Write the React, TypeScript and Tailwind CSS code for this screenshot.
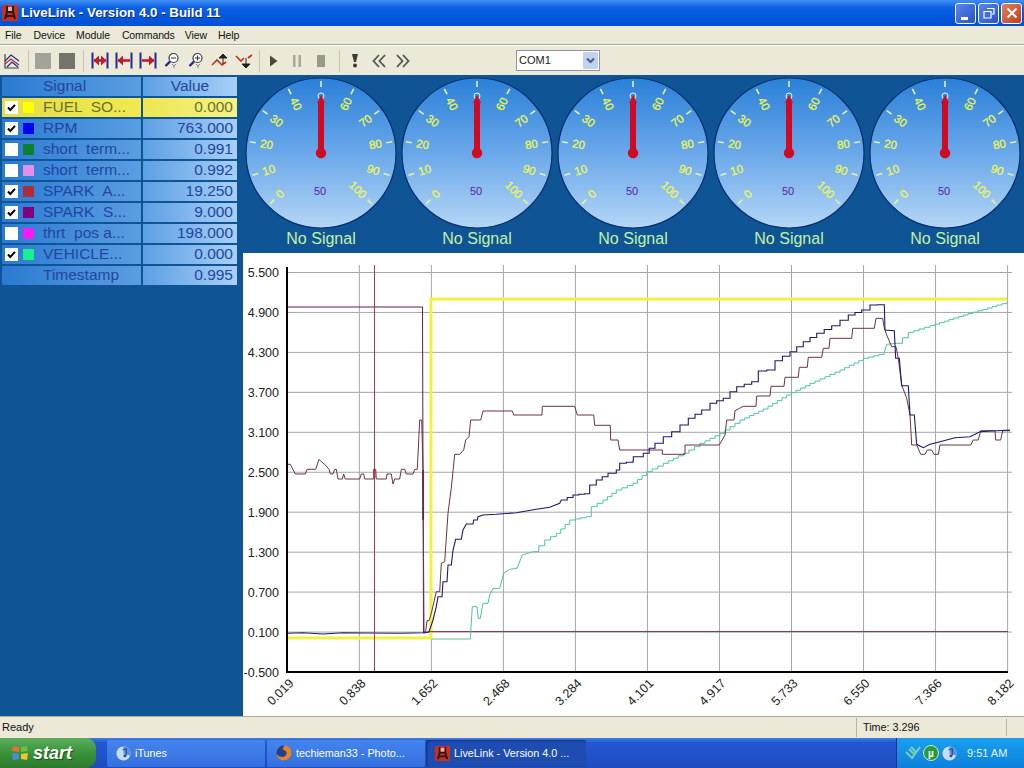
import React from "react";

const SANS = "font-['Liberation_Sans',Arial,sans-serif]";

type P = [number, number];
const z7 = (a: number[]): P[] => pairs(a).map(([x, y]) => [243 + x / 3, 255 + y / 3]);
const z8 = (a: number[]): P[] => pairs(a).map(([x, y]) => [243 + x / 3, 500 + y / 3]);
const z9 = (a: number[]): P[] => pairs(a).map(([x, y]) => [630 + x / 3, 255 + y / 3]);
function pairs(a: number[]): P[] {
  const r: P[] = [];
  for (let i = 0; i < a.length; i += 2) r.push([a[i], a[i + 1]]);
  return r;
}
const line = (p: P[]) => p.map(([x, y]) => `${x.toFixed(1)},${y.toFixed(1)}`).join(" ");
function stairs(p: P[], step: number): P[] {
  const out: P[] = [p[0]];
  for (let i = 1; i < p.length; i++) {
    const [x0, y0] = p[i - 1];
    const [x1, y1] = p[i];
    const n = Math.max(1, Math.round((x1 - x0) / step));
    for (let k = 1; k <= n; k++) {
      const x = x0 + ((x1 - x0) * k) / n;
      const y = y0 + ((y1 - y0) * k) / n;
      out.push([x, out[out.length - 1][1]]);
      out.push([x, y]);
    }
  }
  return out;
}

const brown: P[] = [
  ...z7([132,628,142,628,157,657,187,657,192,643,218,643,228,613,235,620,245,628,258,643,262,657,270,657,275,643,280,643,285,672,298,672,302,657,307,672,350,672,355,657,362,657,365,672,392,672,392,643,398,643,400,672,430,672,432,657,445,657,450,687,455,672,470,672,475,643,485,643,490,657,510,657,515,643,523,643,530,495,536,495,540,645,541,790]),
  ...z8([541,60,543,395,548,395,552,362,558,362,565,340,580,275,590,275,595,190,605,185,615,40,620,0]),
  ...z7([625,700,635,598,650,598,662,585,668,555,678,545,683,495,713,495,720,468,808,468,812,480,897,480,898,454,995,454,1003,480,1052,480,1055,511,1102,511,1103,555,1125,555,1130,585,1170,585]),
  ...z9([97,585,97,598,165,598,165,570,268,570,285,540,290,495,312,495,315,467,340,454,378,454,380,423,420,423,423,394,462,394,465,367,505,367,508,337,532,337,535,307,575,307,580,280,597,280,600,250,665,250,668,220,733,220,738,190,758,190,762,215,770,240,785,275,798,275,805,310,815,390,830,430,840,480,845,570,860,570,872,598,885,598,892,585,905,585,912,598,925,598,930,570,1022,570,1030,555,1045,555,1052,527,1095,527,1097,555,1112,555,1118,527,1140,527]),
];
const blue: P[] = [
  ...z8([132,400,180,398,240,402,300,398,370,399,470,400,545,398,558,395,570,360,580,320,585,290,597,290,600,245,612,245,615,195,625,195,630,150,638,118,655,118,660,90,670,72,690,72,692,60,703,60,705,50,720,45,760,43,820,38,880,28,920,22,950,10]),
  ...stairs([
    ...z7([955,735,990,720,1025,716,1040,690,1060,675,1095,655,1120,645,1130,625,1170,618]),
    ...z9([10,605,40,595,75,565,100,545,125,530,150,510,175,490,215,465,240,445,280,430,300,410,320,395,365,380,385,348,410,345,435,317,480,290,520,260,560,235,605,212,655,180,695,165,720,150,763,148]),
  ], 7),
  ...z9([765,225,793,227,797,310,808,310,815,392,835,392,840,480,853,480,860,568,880,578,900,568,930,560,975,548,1020,545,1050,530,1100,527,1140,525]),
];
const green: P[] = [
  ...z8([565,417,682,417,688,320,702,320,706,355,712,355,720,310,735,310,740,285,750,265,770,265,782,220,800,208,822,205,838,165,870,155]),
  ...stairs([
    ...z8([870,155,905,120,940,100,980,60,1030,50,1045,20,1080,0]),
    ...z7([1120,705,1170,685]),
    ...z9([50,650,100,625,160,595,210,565,270,535,330,495,400,462,470,420,540,385,630,345,700,310,762,295]),
  ], 5),
  ...z9([770,268,800,265]),
  ...stairs(z9([800,265,835,232,900,212,1000,180,1130,142]), 5),
];

const yGrid = ["5.500","4.900","4.300","3.700","3.100","2.500","1.900","1.300","0.700","0.100","-0.500"];
const xGrid = ["0.019","0.838","1.652","2.468","3.284","4.101","4.917","5.733","6.550","7.366","8.182"];

function Chart() {
  return (
    <div className="flex-1 bg-white">
      <svg viewBox="243 253 781 463" width={781} height={463} className={`block ${SANS}`}>
        {yGrid.map((l, i) => {
          const y = 272.5 + i * 39.95;
          return (
            <g key={l}>
              {i < 10 && <line x1={287} x2={1012} y1={y} y2={y} stroke="#a6a6a6" strokeWidth={1} />}
              <text x={279} y={y + 4.5} textAnchor="end" fontSize={12.5} fill="#222">{l}</text>
            </g>
          );
        })}
        {xGrid.map((l, i) => {
          const x = 287.3 + i * 72.03;
          return (
            <g key={l}>
              {i > 0 && <line x1={x} x2={x} y1={265} y2={672} stroke="#a6a6a6" strokeWidth={1} />}
              <text x={x + 7} y={684} textAnchor="end" fontSize={12.5} fill="#222" transform={`rotate(-45 ${x + 7} 684)`}>{l}</text>
            </g>
          );
        })}
        <polyline points="288,638 431,638 431,299 1007,299" fill="none" stroke="#f2f23c" strokeWidth={3} />
        <polyline points="287,307 422.5,307 423.5,633" fill="none" stroke="#5a1f4c" strokeWidth={1} />
        <polyline points="423.5,633 431,631.6 1008,631.6" fill="none" stroke="#8a2a48" strokeWidth={1} />
        <polyline points={line(green)} fill="none" stroke="#50c4a0" strokeWidth={1} />
        <polyline points={line(brown)} fill="none" stroke="#6e3346" strokeWidth={1} />
        <polyline points={line(blue)} fill="none" stroke="#1c1a6a" strokeWidth={1.1} />
        <line x1={423} x2={423} y1={470} y2={520} stroke="#5a1f4c" strokeWidth={1.4} />
        <line x1={374.5} x2={374.5} y1={265} y2={672} stroke="#a83a4c" strokeWidth={1} />
        <line x1={374.5} x2={374.5} y1={469} y2={478} stroke="#a83a4c" strokeWidth={2} />
        <line x1={287} x2={287} y1={267} y2={673} stroke="#000" strokeWidth={2} />
        <line x1={286} x2={1008} y1={672} y2={672} stroke="#000" strokeWidth={2} />
      </svg>
    </div>
  );
}

function Gauge({ id }: { id: number }) {
  const cx = 78, cy = 78;
  const rad = (a: number) => (a * Math.PI) / 180;
  const labels = [0, 10, 20, 30, 40, 60, 70, 80, 90, 100];
  const angle = (v: number) => -135 + (v / 10) * 27;
  const ticks = [0, 10, 20, 30, 40, 50, 60, 70, 80, 90, 100];
  return (
    <div className="w-[156px] flex flex-col items-center">
      <svg width={156} height={155} viewBox="0 0 156 155" className={`block ${SANS}`}>
        <defs>
          <linearGradient id={`g${id}`} x1="0" y1="0" x2="0" y2="1">
            <stop offset="0" stopColor="#2a80d8" />
            <stop offset="0.5" stopColor="#6aa8ea" />
            <stop offset="1" stopColor="#b4d6f6" />
          </linearGradient>
        </defs>
        <circle cx={cx} cy={cy} r={75} fill={`url(#g${id})`} stroke="#0a2f6e" strokeWidth={1.2} />
        {ticks.map((v) => {
          const a = angle(v);
          const sx = Math.sin(rad(a)), sy = -Math.cos(rad(a));
          return <line key={v} x1={cx + sx * 66} y1={cy + sy * 66} x2={cx + sx * 72} y2={cy + sy * 72} stroke="#e2f29a" strokeWidth={1.6} />;
        })}
        {labels.map((v) => {
          const a = angle(v);
          const sx = Math.sin(rad(a)), sy = -Math.cos(rad(a));
          const lr = v === 100 ? 52 : v === 0 ? 58 : 55;
          const lx = cx + sx * lr, ly = cy + sy * lr;
          const rot = a < 0 ? a + 90 : a - 90;
          return (
            <text key={v} x={lx} y={ly} textAnchor="middle" dominantBaseline="central" fontSize={11.5} fill="#eef84c" stroke="#eef84c" strokeWidth={0.25} transform={`rotate(${rot} ${lx} ${ly})`}>{v}</text>
          );
        })}
        <circle cx={cx} cy={21} r={3} fill="none" stroke="#eef6c0" strokeWidth={1} />
        <text x={cx - 1} y={116} textAnchor="middle" dominantBaseline="central" fontSize={11} fill="#5a1fa0">50</text>
        <polygon points={`${cx},20 ${cx + 4},28 ${cx + 3},28 ${cx + 3},78 ${cx - 3},78 ${cx - 3},28 ${cx - 4},28`} fill="#d00a22" />
        <circle cx={cx} cy={cy} r={5.2} fill="#d00a22" />
      </svg>
      <div className={`${SANS} text-[16px] leading-[18px] text-[#c4f2a4]`}>No Signal</div>
    </div>
  );
}

type Row = { name: string; value: string; color?: string; checked?: boolean; hi?: boolean };
const rows: Row[] = [
  { name: "FUEL  SO...", value: "0.000", color: "#ffff00", checked: true, hi: true },
  { name: "RPM", value: "763.000", color: "#0000f0", checked: true },
  { name: "short  term...", value: "0.991", color: "#0c8030" },
  { name: "short  term...", value: "0.992", color: "#e48ee8" },
  { name: "SPARK  A...", value: "19.250", color: "#b02c3c", checked: true },
  { name: "SPARK  S...", value: "9.000", color: "#800080", checked: true },
  { name: "thrt  pos a...", value: "198.000", color: "#f41cf0" },
  { name: "VEHICLE...", value: "0.000", color: "#18f090", checked: true },
  { name: "Timestamp", value: "0.995" },
];

function Check() {
  return (
    <svg width={13} height={13} viewBox="0 0 13 13" className="block">
      <rect width={13} height={13} fill="#fff" />
      <path d="M3 6.5 L5.3 9 L10 3.8" fill="none" stroke="#000" strokeWidth={2} />
    </svg>
  );
}

function SignalTable() {
  return (
    <div className={`w-[243px] pt-[2px] pl-[2px] flex flex-col gap-[2px] ${SANS} text-[15.5px] leading-[18px]`}>
      <div className="flex gap-[2px] h-[19px]">
        <div className="w-[139px] pl-[41px] bg-gradient-to-r from-[#2a7ad2] to-[#5a9ee2] text-[#22469e]">Signal</div>
        <div className="w-[94px] text-center bg-gradient-to-r from-[#5c9fe4] to-[#a8d0f6] text-[#22469e]">Value</div>
      </div>
      {rows.map((r, i) => (
        <div key={i} className="flex gap-[2px] h-[19px]">
          <div className={`w-[139px] flex items-center bg-gradient-to-r ${r.hi ? "from-[#e4dc48] to-[#f0ea50] text-[#6a7030]" : "from-[#2a7ad2] to-[#5a9ee2] text-[#22469e]"}`}>
            {r.color ? (
              <>
                <div className="ml-[3px] w-[13px] h-[13px]">{r.checked ? <Check /> : <div className="w-[13px] h-[13px] bg-white" />}</div>
                <div className="ml-[5px] w-[11px] h-[11px]" style={{ background: r.color }} />
                <span className="ml-[9px] pb-[1px] whitespace-pre">{r.name}</span>
              </>
            ) : (
              <span className="ml-[41px] pb-[1px]">{r.name}</span>
            )}
          </div>
          <div className={`w-[94px] text-right pr-[4px] bg-gradient-to-r ${r.hi ? "from-[#eee650] to-[#f6f284] text-[#6a7030]" : "from-[#5c9fe4] to-[#a8d0f6] text-[#22469e]"}`}>{r.value}</div>
        </div>
      ))}
    </div>
  );
}

const Slot = ({ children, ml = "" }: { children: React.ReactNode; ml?: string }) => (
  <div className={`w-[24px] h-[24px] flex items-center justify-center shrink-0 ${ml}`}>{children}</div>
);
const Sep = ({ ml }: { ml: string }) => <div className={`w-px h-[22px] bg-[#c8c4b0] shrink-0 ${ml}`} />;

function Span({ left, right }: { left?: boolean; right?: boolean }) {
  return (
    <svg width={18} height={17} viewBox="0 0 18 17">
      <path d="M1.5 0.5 V16.5" stroke="#1c2a8c" strokeWidth={2} />
      <path d="M16.5 0.5 V16.5" stroke="#1c2a8c" strokeWidth={2} />
      <path d="M3 8.5 H15" stroke="#c01c2c" strokeWidth={2.6} />
      {left !== false && <path d="M2.5 8.5 L8 3.5 V13.5 Z" fill="#c01c2c" />}
      {right !== false && <path d="M15.5 8.5 L10 3.5 V13.5 Z" fill="#c01c2c" />}
    </svg>
  );
}
function Glass({ plus }: { plus?: boolean }) {
  return (
    <svg width={16} height={17} viewBox="0 0 16 17">
      <circle cx={9.5} cy={6} r={4.5} fill="#fff" stroke="#3a3a3a" strokeWidth={1.2} />
      <path d="M6 9.5 L1.5 14" stroke="#1c2a8c" strokeWidth={2.4} />
      <path d="M7 6 H12" stroke="#333" strokeWidth={1} />
      {plus && <path d="M9.5 3.5 V8.5" stroke="#333" strokeWidth={1} />}
      <path d="M8 12 L10 14 L12 12 M10 14 V16" stroke="#666" strokeWidth={0.8} fill="none" />
    </svg>
  );
}
function Zig({ up }: { up?: boolean }) {
  return (
    <svg width={18} height={16} viewBox="0 0 18 16">
      {up ? (
        <>
          <path d="M1 12 L6 7 L11 12 L15 9" fill="none" stroke="#c0301c" strokeWidth={1.6} />
          <path d="M12 1 L8 5 H16 Z M12 4 V11" fill="#222" stroke="#222" strokeWidth={1} />
        </>
      ) : (
        <>
          <path d="M1 3 L6 8 L9 5 M13 5 L17 2" fill="none" stroke="#c0301c" strokeWidth={1.6} />
          <path d="M11 15 L7 11 H15 Z M11 5 V12" fill="#222" stroke="#222" strokeWidth={1} />
        </>
      )}
    </svg>
  );
}

function Toolbar() {
  return (
    <div className="h-[30px] flex items-center border-t border-[#fff] shadow-[0_-1px_0_#aca899] bg-[#ece9d8]">
      <Slot>
        <svg width={16} height={16} viewBox="0 0 16 16">
          <path d="M1 1 V15 H15" fill="none" stroke="#444" strokeWidth={1.2} />
          <path d="M1 8 L7 2 L15 8" fill="none" stroke="#1c2a8c" strokeWidth={1.2} />
          <path d="M1 11 L7 6 L15 12" fill="none" stroke="#b02c3c" strokeWidth={1.2} />
          <path d="M3 14 L8 9 L14 14" fill="none" stroke="#1c2a8c" strokeWidth={1.2} />
        </svg>
      </Slot>
      <Sep ml="ml-[4px]" />
      <Slot ml="ml-[2px]"><div className="w-[16px] h-[16px] bg-[#a5a297]" /></Slot>
      <Slot><div className="w-[16px] h-[16px] bg-[#75736a]" /></Slot>
      <Sep ml="ml-[4px]" />
      <Slot ml="ml-[4px]"><Span /></Slot>
      <Slot><Span right={false} /></Slot>
      <Slot><Span left={false} /></Slot>
      <Slot><Glass /></Slot>
      <Slot><Glass plus /></Slot>
      <Slot><Zig up /></Slot>
      <Slot><Zig /></Slot>
      <Sep ml="ml-[3px]" />
      <Slot ml="ml-[1px]">
        <svg width={9} height={12} viewBox="0 0 9 12"><path d="M1 0.5 L8.5 6 L1 11.5 Z" fill="#4a4a44" /></svg>
      </Slot>
      <Slot>
        <svg width={10} height={12} viewBox="0 0 10 12"><path d="M1 0 H3.5 V12 H1 Z M6.5 0 H9 V12 H6.5 Z" fill="#aaa89c" /></svg>
      </Slot>
      <Slot>
        <svg width={8} height={12} viewBox="0 0 8 12"><rect width={8} height={12} fill="#9a988c" /></svg>
      </Slot>
      <Sep ml="ml-[6px]" />
      <Slot ml="ml-[3px]">
        <svg width={8} height={15} viewBox="0 0 8 15"><path d="M1 1 H7 L5 9 H3 Z" fill="#3c3c36" /><circle cx={4} cy={12.5} r={2} fill="#3c3c36" /></svg>
      </Slot>
      <Slot>
        <svg width={14} height={14} viewBox="0 0 14 14"><path d="M7 1 L1.5 7 L7 13 M13 1 L7.5 7 L13 13" fill="none" stroke="#555" strokeWidth={1.8} /></svg>
      </Slot>
      <Slot>
        <svg width={14} height={14} viewBox="0 0 14 14"><path d="M1 1 L6.5 7 L1 13 M7 1 L12.5 7 L7 13" fill="none" stroke="#555" strokeWidth={1.8} /></svg>
      </Slot>
      <div className={`ml-[101px] w-[84px] h-[21px] bg-white border border-[#8a96a8] flex items-center justify-between ${SANS} text-[11px] text-[#222] pl-[2px] pr-[1px]`}>
        <span>COM1</span>
        <div className="w-[15px] h-[17px] bg-[#c4d2f2] rounded-[1px] flex items-center justify-center">
          <svg width={9} height={7} viewBox="0 0 9 7"><path d="M1 1.5 L4.5 5 L8 1.5" fill="none" stroke="#4a5a8c" strokeWidth={2} /></svg>
        </div>
      </div>
    </div>
  );
}

function AppIcon({ size = 16 }: { size?: number }) {
  return (
    <svg width={size} height={size} viewBox="0 0 16 16" className="shrink-0">
      <rect width={16} height={16} rx={1} fill="#c8301c" />
      <path d="M5 1 V7 L3 14 M11 1 V7 L13 14 M5 7 H11 M4 11 H12" fill="none" stroke="#2a1a20" strokeWidth={2} />
      <rect x={6} y={2} width={4} height={4} fill="#e8b0a0" />
    </svg>
  );
}

function TitleBar() {
  return (
    <div className={`h-[26px] flex items-center pl-[2px] pr-[2px] bg-gradient-to-b from-[#3f8ff2] via-[#0a5fe6] via-30% to-[#0050d4] ${SANS}`}>
      <AppIcon />
      <span className="ml-[3px] text-white font-bold text-[13.35px] [text-shadow:1px_1px_0_#0a2a80]">LiveLink - Version 4.0 - Build 11</span>
      <div className="ml-auto flex gap-[2px]">
        <div className="w-[21px] h-[21px] rounded-[3px] border border-white bg-gradient-to-br from-[#5a88e8] to-[#2a50c8] relative">
          <div className="absolute left-[5px] bottom-[3px] w-[7px] h-[3px] bg-white" />
        </div>
        <div className="w-[21px] h-[21px] rounded-[3px] border border-white bg-gradient-to-br from-[#5a88e8] to-[#2a50c8] flex items-center justify-center">
          <svg width={12} height={12} viewBox="0 0 12 12"><path d="M4 1.5 H11 V7 H9 M1 4.5 H8 V11 H1 Z" fill="none" stroke="#fff" strokeWidth={1.2} /></svg>
        </div>
        <div className="w-[21px] h-[21px] rounded-[3px] border border-white bg-gradient-to-br from-[#e0805c] to-[#c03c18] flex items-center justify-center">
          <svg width={12} height={12} viewBox="0 0 12 12"><path d="M1.5 1.5 L10.5 10.5 M10.5 1.5 L1.5 10.5" stroke="#fff" strokeWidth={2} /></svg>
        </div>
      </div>
    </div>
  );
}

function MenuBar() {
  const items: [string, string][] = [["File", "ml-[5px]"], ["Device", "ml-[12px]"], ["Module", "ml-[11px]"], ["Commands", "ml-[12px]"], ["View", "ml-[10px]"], ["Help", "ml-[11px]"]];
  return (
    <div className={`h-[19px] flex items-center bg-[#ece9d8] text-[10.5px] tracking-[-0.1px] text-[#111] ${SANS}`}>
      {items.map(([t, m]) => <span key={t} className={m}>{t}</span>)}
    </div>
  );
}

function ITunesIcon({ size = 15 }: { size?: number }) {
  return (
    <svg width={size} height={size} viewBox="0 0 16 16" className="shrink-0">
      <circle cx={8} cy={8} r={7.5} fill="#c8dcf4" />
      <path d="M8 .5 A7.5 7.5 0 0 1 15 10 L8 8 Z" fill="#5a8ed8" />
      <path d="M7 4 L11 3 V10" stroke="#2a4c9c" strokeWidth={1.2} fill="none" />
      <circle cx={9.5} cy={10.5} r={1.6} fill="#2a4c9c" />
    </svg>
  );
}

function TaskButton({ label, icon, active, w }: { label: string; icon: React.ReactNode; active?: boolean; w: string }) {
  return (
    <div className={`${w} h-[27px] flex items-center gap-[4px] pl-[9px] rounded-[2px] text-[10.8px] text-white shrink-0 ${active ? "bg-[#1e4cb0] shadow-[inset_1px_1px_2px_#123080]" : "bg-gradient-to-b from-[#4484ec] to-[#3470e0]"}`}>
      {icon}
      <span className="whitespace-nowrap">{label}</span>
    </div>
  );
}

function Taskbar() {
  return (
    <div className={`h-[30px] flex items-center bg-gradient-to-b from-[#3d7ee6] via-[#2458d2] via-15% to-[#1e4cc0] ${SANS}`}>
      <div className="w-[96px] h-full flex items-center pl-[11px] gap-[4px] rounded-r-[10px] bg-gradient-to-b from-[#5cae5c] via-[#3a923a] to-[#2c7a2c] shrink-0">
        <svg width={18} height={18} viewBox="0 0 18 18">
          <path d="M2 2 L8 3 V8 L1 7 Z" fill="#e8702c" />
          <path d="M10 3 L16 2 L17 7 L10 8 Z" fill="#6cc040" />
          <path d="M1 9 L8 10 V15 L2 16 Z" fill="#4a8ce8" />
          <path d="M10 10 L17 9 L16 16 L10 15 Z" fill="#f0c82c" />
        </svg>
        <span className="text-white font-bold italic text-[18px] [text-shadow:1px_1px_1px_#1a4a1a]">start</span>
      </div>
      <div className="ml-[11px]">
        <TaskButton w="w-[158px]" label="iTunes" icon={<ITunesIcon />} />
      </div>
      <div className="ml-[2px]">
        <TaskButton
          w="w-[158px]"
          label="techieman33 - Photo..."
          icon={
            <svg width={16} height={16} viewBox="0 0 16 16" className="shrink-0">
              <circle cx={8} cy={8} r={7.5} fill="#24408c" />
              <path d="M8 .5 C13 .5 15.5 4 15.5 8 C15.5 12 12 15.5 8 15.5 C4 15.5 1 13 .6 9 C2 11 4 12 6 12 C9 12 11 10 10.5 7.5 C10 5.5 8 5 6.5 4 C7 3 8 2 8 .5 Z" fill="#e8822c" />
            </svg>
          }
        />
      </div>
      <div className="ml-[1px]">
        <TaskButton w="w-[160px]" active label="LiveLink - Version 4.0 ..." icon={<AppIcon size={15} />} />
      </div>
      <div className="ml-auto w-[128px] h-full flex items-center bg-gradient-to-b from-[#1aa0ee] to-[#0c80dc] border-l border-[#123080] pl-[8px] shrink-0">
        <svg width={16} height={16} viewBox="0 0 16 16" className="shrink-0">
          <path d="M1 7 L7 13 L15 2 M4 4 L9 9 M6 2 L11 7" fill="none" stroke="#7ad0b0" strokeWidth={2} />
        </svg>
        <div className="ml-[2px] w-[16px] h-[16px] rounded-full bg-[#2a9a3c] border border-[#cfe8cf] text-white text-[10px] font-bold flex items-center justify-center">µ</div>
        <div className="ml-[3px]"><ITunesIcon /></div>
        <span className="ml-[10px] text-[11px] text-[#e4f2fc] whitespace-nowrap">9:51 AM</span>
      </div>
    </div>
  );
}

function StatusBar() {
  return (
    <div className={`h-[22px] flex items-center bg-[#ece9d8] border-t border-[#aca899] text-[#111] ${SANS}`}>
      <span className="ml-[2px] text-[11px]">Ready</span>
      <div className="ml-auto w-[168px] h-[19px] flex items-center border-l border-[#b8b4a0]">
        <span className="ml-[6px] text-[10.8px]">Time: 3.296</span>
        <div className="ml-auto mr-[17px] w-px h-[17px] bg-[#b8b4a0]" />
      </div>
    </div>
  );
}

export default function App() {
  return (
    <div className="w-[1024px] h-[768px] flex flex-col overflow-hidden bg-[#ece9d8]">
      <TitleBar />
      <MenuBar />
      <Toolbar />
      <div className="flex-1 flex bg-[#0f5596] min-h-0">
        <SignalTable />
        <div className="flex-1 flex flex-col">
          <div className="h-[178px] flex">
            {[0, 1, 2, 3, 4].map((i) => <Gauge key={i} id={i} />)}
          </div>
          <Chart />
        </div>
      </div>
      <StatusBar />
      <Taskbar />
    </div>
  );
}
